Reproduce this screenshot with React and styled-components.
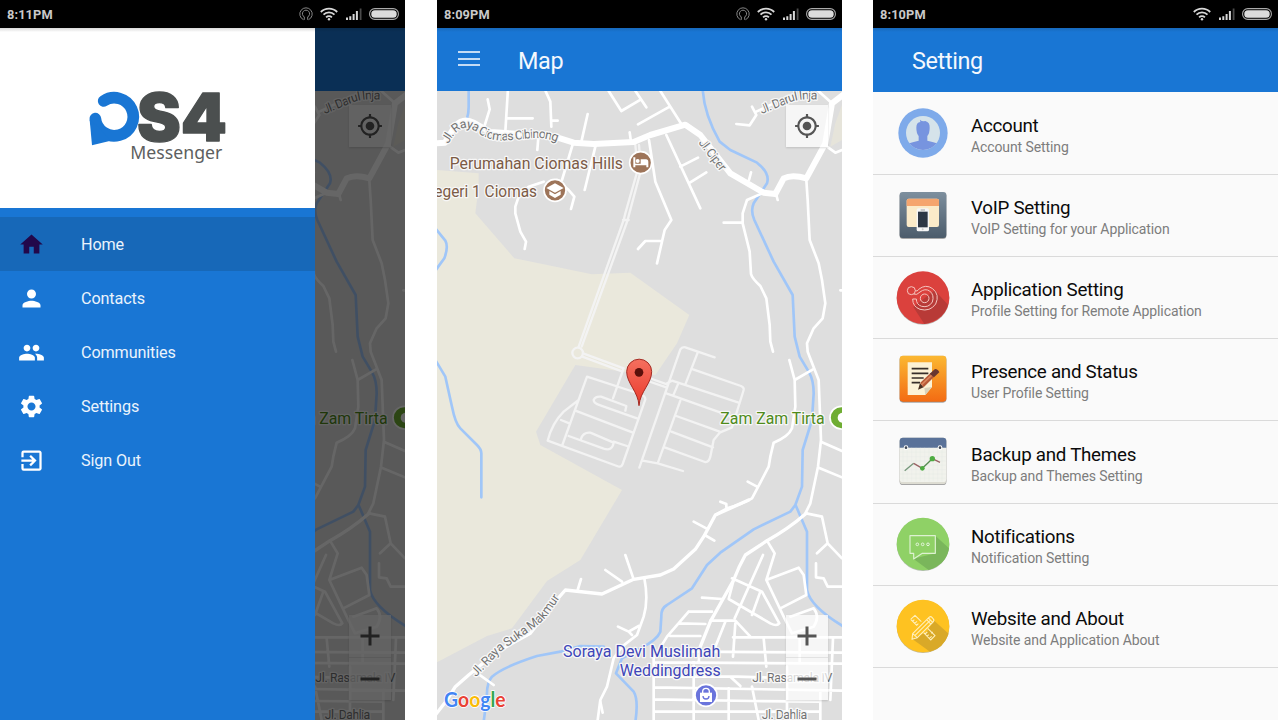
import React from 'react';
import styled, { createGlobalStyle } from 'styled-components';
import { MdHome, MdPerson, MdPeople, MdSettings, MdExitToApp, MdGpsFixed } from 'react-icons/md';

const BLUE = '#1976d4';

const GlobalStyle = createGlobalStyle`
  * { box-sizing: border-box; }
  body { margin: 0; background: #fff; font-family: Roboto, "Liberation Sans", sans-serif; }
  svg { display: block; flex: none; }
`;

const Board = styled.main`
  display: grid;
  grid-template-columns: 405px 405px 405px;
  column-gap: 32px;
  width: 1280px;
  height: 720px;
  overflow: hidden;
`;

const Screen = styled.section`
  position: relative;
  display: flex;
  flex-direction: column;
  height: 720px;
  overflow: hidden;
  background: #fafafa;
  margin-left: ${(p) => p.$shift || 0}px;
  width: 405px;
`;

const StatusRow = styled.div`
  flex: none;
  display: flex;
  align-items: center;
  height: 28px;
  padding: 0 6px 0 7px;
  background: #000;
`;

const Clock = styled.span`
  flex: 1;
  padding-top: 1px;
  color: #c9c9c9;
  font-size: 12.8px;
  font-weight: 700;
  letter-spacing: 0.1px;
`;

const StatusIcons = styled.div`
  display: flex;
  align-items: center;
  gap: 7.5px;
`;

const AppBar = styled.header`
  flex: none;
  display: flex;
  align-items: center;
  height: ${(p) => p.$height}px;
  padding: 0 0 2px ${(p) => p.$inset}px;
  gap: 38.5px;
  background: linear-gradient(#1769bb, ${BLUE} 4px);
`;

const BarTitle = styled.h1`
  margin: 0;
  padding-top: 4px;
  color: #f4f8fd;
  font-size: 23.4px;
  line-height: 26px;
  font-weight: 400;
  letter-spacing: -0.35px;
`;

const MenuButton = styled.button`
  display: flex;
  flex-direction: column;
  gap: 4.3px;
  width: 21.5px;
  padding: 0;
  border: 0;
  background: none;
`;

const MenuLine = styled.span`
  height: 2px;
  background: #c5dcf5;
`;

const MapArea = styled.div`
  position: relative;
  flex: 1;
  min-height: 0;
`;

const MapControl = styled.div`
  position: absolute;
  right: 14px;
  ${(p) => (p.$top ? 'top: 14px;' : 'bottom: 20px;')}
  display: flex;
  flex-direction: column;
  width: 42px;
  background: rgba(255, 255, 255, 0.72);
  box-shadow: 0 1px 2px rgba(0, 0, 0, 0.14);
  color: #555;
`;

const ControlButton = styled.button`
  display: flex;
  align-items: center;
  justify-content: center;
  width: 42px;
  height: 42px;
  padding: 0;
  border: 0;
  background: none;
  color: inherit;
  & + & { border-top: 1px solid rgba(0, 0, 0, 0.08); height: 43px; }
`;

const Scrim = styled.div`
  position: absolute;
  inset: 28px 0 0 0;
  background: rgba(0, 0, 0, 0.6);
`;

const Drawer = styled.nav`
  position: absolute;
  left: 0;
  top: 28px;
  bottom: 0;
  width: 315px;
  background: ${BLUE};
`;

const Brand = styled.div`
  display: flex;
  align-items: center;
  justify-content: center;
  height: 180px;
  padding-top: 20px;
  margin-bottom: 9px;
  background: linear-gradient(#d8d8d8, #fff 4px);
`;

const DrawerItem = styled.a`
  display: flex;
  align-items: center;
  height: 54px;
  padding-left: 18px;
  gap: 36px;
  background: ${(p) => (p.$active ? '#1768b8' : 'transparent')};
  color: #eaf3fc;
  font-size: 16.2px;
  line-height: 20px;
  letter-spacing: -0.12px;
  svg { color: ${(p) => (p.$active ? '#22084a' : '#fff')}; }
  span { padding-top: 2px; }
`;

const SettingList = styled.div`
  display: flex;
  flex-direction: column;
  padding-top: 0.8px;
`;

const SettingRow = styled.article`
  display: flex;
  align-items: center;
  height: 82.17px;
  padding-left: 22.7px;
  gap: 21.3px;
  border-bottom: 1px solid #dadada;
`;

const SettingText = styled.div`
  display: flex;
  flex-direction: column;
  padding-top: 5px;
`;

const SettingTitle = styled.h2`
  margin: 0;
  color: #0b0b0b;
  font-size: 18.75px;
  line-height: 22px;
  font-weight: 400;
  letter-spacing: -0.27px;
`;

const SettingNote = styled.p`
  margin: 0;
  color: #7d7d7d;
  font-size: 14px;
  line-height: 20px;
  letter-spacing: -0.1px;
`;

function StatusBar({ time, cast }) {
  return (
    <StatusRow>
      <Clock>{time}</Clock>
      <StatusIcons>
        {cast && (
          <svg width="14" height="14" viewBox="0 0 14 14" fill="none" stroke="#858585" strokeWidth="1">
            <path d="M4.5 12.7A6.2 6.2 0 1 1 9.5 12.7M5.2 9.9A3.6 3.6 0 1 1 8.8 9.9M5.3 9.7V12.8M8.7 9.7V12.8" />
          </svg>
        )}
        <svg width="18" height="14" viewBox="0 0 18 14" fill="none" stroke="#d8d8d8" strokeWidth="1.8">
          <path d="M.8 5A11.5 11.5 0 0 1 17.2 5M3.5 7.7A7.7 7.7 0 0 1 14.5 7.7M6.1 10.3A4.1 4.1 0 0 1 11.9 10.3" />
          <circle cx="9" cy="12.3" r="1.2" fill="#d8d8d8" stroke="none" />
        </svg>
        <svg width="16" height="14" viewBox="0 0 16 14" fill="#d8d8d8">
          <path d="M0 10.4h2v2.6H0zM3.3 9.2h2V13h-2zM6.6 6.9h2V13h-2zM9.9 4h2v9h-2z" />
          <path d="M13.7 1.5h1.8V13h-1.8z" fill="#4a4a4a" />
        </svg>
        <svg width="30" height="12" viewBox="0 0 30 12">
          <rect x=".6" y=".6" width="28.8" height="10.8" rx="5.2" fill="none" stroke="#aaa" strokeWidth="1.1" />
          <rect x="2.3" y="2.2" width="25.4" height="7.6" rx="3.6" fill="#dcdcdc" />
        </svg>
      </StatusIcons>
    </StatusRow>
  );
}

/* Map drawing: three units to a pixel */
const halo = { stroke: '#f7f7f7', strokeWidth: 8, paintOrder: 'stroke', strokeLinejoin: 'round' };

function MapDrawing({ id }) {
  return (
    <svg width="405" height="629" viewBox="0 273 1215 1887" fontFamily="Roboto, sans-serif">
      <defs>
        <linearGradient id={`${id}-pin`} x1="0" y1="0" x2="0" y2="1">
          <stop offset="0" stopColor="#f5705f" />
          <stop offset="1" stopColor="#ea3a2c" />
        </linearGradient>
        <path id={`${id}-raya`} d="M34 432Q58 386 84 384Q104 384 122 398Q152 419 190 422L225 420L290 414Q330 412 366 428" />
        <path id={`${id}-ciper`} d="M784 428L852 518" />
        <path id={`${id}-suka`} d="M117 2032L190 1955L275 1896Q310 1872 330 1848L372 1788" />
        <path id={`${id}-darul`} d="M974 342L1062 306Q1095 293 1155 300" />
      </defs>
      <rect y="273" width="1215" height="1887" fill="#dedede" />
      <path fill="#eae8dc" d="M0 510L125 520V560L115 640L232 775L465 823L580 818L757 945L720 1030L655 1125L540 1112L415 1095L297 1295L310 1335L555 1470L430 1680L330 1743L225 1885L150 1908L0 1987Z" />
      <path fill="#e6e4da" d="M1215 315L1195 370L1180 440L1215 420Z" />

      <g fill="none" stroke="#a0c6f8" strokeWidth="8" strokeLinejoin="round" strokeLinecap="round">
        <path d="M95 265V320Q95 340 90 355M797 265Q800 340 848 425L880 450L960 488Q1000 520 990 550L950 610Q940 632 952 660L1010 785L1067 885L1073 1010L1088 1070L1115 1115Q1130 1140 1130 1180L1125 1260L1097 1350L1095 1460L1075 1515L1060 1535L950 1588L850 1658L810 1695L765 1765L690 1815Q672 1825 673 1850L670 1895Q660 1920 610 1945L555 1975L537 2020L590 2075Q605 2100 595 2165" />
        <path d="M-5 685L25 722Q35 740 22 775L-5 812M-5 1080L25 1130L45 1220Q55 1270 70 1285L120 1335Q133 1348 133 1360V1492M1077 1518L1110 1595V1770Q1120 1820 1220 1880M500 1940L430 1938L370 1955L300 1968Q200 2000 165 2030Q148 2050 150 2090L140 2165" />
      </g>

      <g fill="none" stroke="#f3f3f3" strokeWidth="7" strokeLinejoin="round" strokeLinecap="round">
        <path d="M595 435L602 510L565 640L560 660L425 1040M606 435L612 510L577 640L572 660L434 1040M558 660H575" />
        <circle cx="422" cy="1059" r="16" />
        <path d="M438 1060L560 1105M436 1070L555 1114M645 1137L692 1154M641 1146L688 1162" />
        <g transform="translate(0 1020)">
          <path d="M450 110L610 162Q625 168 625 178L557 372Q552 384 540 378L332 302Q345 250 380 215L425 180M450 110L375 318M558 90L528 175M415 212L588 278M372 240L397 250M600 235L490 196Q470 190 470 180Q475 168 492 170L568 198L565 212M395 288L500 326Q526 334 530 308L460 278Q438 276 432 297M530 305L570 318" />
          <path d="M607 383L730 28Q735 20 745 22L833 52M782 38L745 133M768 88L912 138Q922 142 920 150L885 262L848 278L830 300L820 350Q815 368 804 366L683 322M690 130L705 122L905 188M688 160L885 230M724 130L710 163M730 182L662 370M718 228L848 275M703 275L828 322M617 362L662 370L738 393" />
        </g>
      </g>

      <g fill="none" stroke="#fff" strokeWidth="8" strokeLinejoin="round" strokeLinecap="round">
        <path strokeWidth="18" d="M-5 430L24 428L55 377Q80 352 110 368L160 396L300 405L360 412L410 428L470 432L590 426L640 405L745 374L790 405L880 520L980 578L1015 582L1040 535Q1065 522 1108 535L1165 430L1185 310L1220 283" />
        <path d="M152 298L158 328L145 370L140 385M213 265L205 395M208 355H287M322 265L340 305L343 380M343 362H362M305 400L301 450M452 342L432 430M408 430L375 540M475 440L443 570M515 273L553 333L612 298M590 265L628 322M665 265L733 372M603 373L698 320M688 405L790 625M730 500L783 473M755 550L808 517M636 420L655 545L703 660L683 690L660 790M670 723H625L603 747M578 397L582 425M898 372L938 376L958 345L945 320M958 335L1010 310M942 517L936 540M980 578L930 600L917 640V670L938 755L942 822Q945 835 970 858L988 895L998 975L1000 1025L1008 1055M860 668H917M1018 585L1022 600M1108 540L1112 600L1118 720L1145 790L1155 840L1165 910L1157 955L1130 985L1110 1030L1112 1055L1145 1140L1152 1320L1143 1400L1120 1510L1105 1540M1170 440L1195 458L1215 450M1135 265L1185 310M263 747L267 725L250 695L235 640V620L245 590L275 560L320 545M360 540L395 570L412 590L402 627M1210 871H1220" />
        <path d="M1057 1080L1073 1140L1128 1108M1073 1140L1075 1220L1065 1285Q1055 1310 1010 1328L1000 1370L995 1400L945 1495Q920 1510 870 1525L835 1545M932 1445L960 1460M850 1505L868 1512L868 1522M1155 1327L1215 1353M1145 1403L1215 1432" />
        <g transform="translate(0 1500)">
          <path strokeWidth="10" d="M935 0L835 45L800 110L775 148L710 207L670 225L590 238L495 282L385 270L350 310L280 400L180 455L95 525L55 560L30 600L-5 645M1108 40Q1050 90 990 122L925 165Q905 200 890 240L820 365L790 440" />
          <path d="M432 237L422 270M565 165L590 238M505 210L555 245M622 235Q635 300 620 350L600 405L555 440L530 475L510 560L490 600L482 660M543 380L575 395L605 378M575 395L585 405M770 65L808 85M803 105L832 122M1108 40L1155 50L1172 130L1215 175M1172 130L1140 160M1137 190V232L1160 235L1172 260H1215M990 122L1013 160L988 240L1040 350L1065 400L1130 380Q1150 350 1130 325L1060 350M988 240L1085 203L1100 225L1108 285L1030 325M978 165L893 355M885 235L975 275L1027 370Q1020 380 1000 370L875 297L890 240M970 275L945 345M795 293L855 297" />
          <path d="M820 362L895 362L940 410M755 335H825M755 335L690 410L650 475V660M725 370L805 372M700 408H790M865 365L835 440M895 370L888 470M888 412H1215M980 415L988 500M760 455L1215 458M650 487L1215 491M650 530H900L1090 535M880 530L910 558M650 562L1215 572M650 598L945 603L1150 605M650 635H1150M770 487V660M790 440L785 487M875 565V660M945 560L965 660M1050 500V660M1088 412V490M1150 570V660M1188 415L1180 600M110 512L170 555M490 605L497 638" />
        </g>
      </g>

      <g fill="#727272" fontSize="37" {...halo}>
        <text><textPath href={`#${id}-raya`} textLength="358">Jl. Raya Ciomas Cibinong</textPath></text>
        <text><textPath href={`#${id}-ciper`} textLength="110">Jl. Ciper</textPath></text>
        <text><textPath href={`#${id}-suka`} textLength="350">Jl. Raya Suka Makmur</textPath></text>
        <text><textPath href={`#${id}-darul`} textLength="175">Jl. Darul Inja</textPath></text>
        <text x="946" y="2047" textLength="240">Jl. Rasamala IV</text>
        <text x="974" y="2158" textLength="137">Jl. Dahlia</text>
      </g>

      <g fontSize="50" {...halo}>
        <g fill="#7c5b46">
          <text x="38" y="507" textLength="520" lengthAdjust="spacingAndGlyphs">Perumahan Ciomas Hills</text>
          <text x="-8" y="590" textLength="308" lengthAdjust="spacingAndGlyphs">egeri 1 Ciomas</text>
        </g>
        <text x="850" y="1272" textLength="313" lengthAdjust="spacingAndGlyphs" fill="#4f8a1b">Zam Zam Tirta</text>
        <g fill="#4046b8">
          <text x="378" y="1972" textLength="472" lengthAdjust="spacingAndGlyphs">Soraya Devi Muslimah</text>
          <text x="548" y="2028" textLength="303" lengthAdjust="spacingAndGlyphs">Weddingdress</text>
        </g>
      </g>

      <g stroke="#fff" strokeWidth="5">
        <circle cx="611" cy="488" r="33" fill="#9d7459" />
        <circle cx="354" cy="571" r="33" fill="#9d7459" />
        <circle cx="1213" cy="1253" r="34" fill="#6fad33" />
        <circle cx="807" cy="2086" r="33" fill="#6a74dc" />
      </g>
      <circle cx="1217" cy="1253" r="15" fill="#fff" />
      <path fill="#fff" d="M589 472h6v19h16v-13h16q7 0 7 8v16h-6v-6h-33v6h-6z" />
      <circle cx="602" cy="483" r="6" fill="#fff" />
      <path fill="#fff" d="M328 564L354 550L380 564L354 578ZM337 573V584L354 594L371 584V573L354 583Z" />
      <path fill="#fff" d="M789 2078h36v28h-36z" />
      <path fill="none" stroke="#fff" strokeWidth="4" d="M797 2082v-7a10 10 0 0 1 20 0v7" />
      <path fill="none" stroke="#6a74dc" strokeWidth="4" d="M798 2088a9 9 0 0 0 18 0" />

      <path d="M606 1217C604 1175 569 1150 569 1115A37 37 0 0 1 644 1115C644 1150 609 1175 606 1217Z" fill={`url(#${id}-pin)`} stroke="#a52a22" strokeWidth="3" />
      <circle cx="606" cy="1117" r="13" fill="#5b100b" />

      <text x="21" y="2122" fontFamily="Lato, sans-serif" fontSize="64" fontWeight="700" textLength="185" lengthAdjust="spacingAndGlyphs" {...halo} stroke="#fff" strokeWidth="5">
        <tspan fill="#4285f4">G</tspan><tspan fill="#e94235">o</tspan><tspan fill="#fabb05">o</tspan><tspan fill="#4285f4">g</tspan><tspan fill="#34a853">l</tspan><tspan fill="#e94235">e</tspan>
      </text>
    </svg>
  );
}

function MapView({ id }) {
  return (
    <MapArea>
      <MapDrawing id={id} />
      <MapControl $top>
        <ControlButton aria-label="My location"><MdGpsFixed size={26} /></ControlButton>
      </MapControl>
      <MapControl>
        <ControlButton aria-label="Zoom in">
          <svg width="20" height="20" viewBox="0 0 20 20" stroke="#555" strokeWidth="3"><path d="M10 .5v19M.5 10h19" /></svg>
        </ControlButton>
        <ControlButton aria-label="Zoom out">
          <svg width="20" height="20" viewBox="0 0 20 20" stroke="#555" strokeWidth="3"><path d="M.5 10h19" /></svg>
        </ControlButton>
      </MapControl>
    </MapArea>
  );
}

function Logo() {
  return (
    <svg width="155" height="95" viewBox="0 0 465 285">
      <path d="M71 60A57 57 0 1 1 46 113" fill="none" stroke={BLUE} strokeWidth="35" strokeLinecap="round" />
      <path d="M29 116L36 193L92 179L52 135Z" fill={BLUE} />
      <text x="171" y="180" fontFamily="Inter, sans-serif" fontSize="197" fontWeight="900" fill="#4b4f4f" stroke="#4b4f4f" strokeWidth="4" strokeLinejoin="round" textLength="270" lengthAdjust="spacingAndGlyphs">S4</text>
      <text x="151" y="235" fontFamily="'Noto Sans', sans-serif" fontSize="52" fill="#5d6060" textLength="276" lengthAdjust="spacingAndGlyphs">Messenger</text>
    </svg>
  );
}

const drop = { filter: 'drop-shadow(0 2px 2px rgba(0,0,0,.5))' };

const AccountIcon = () => (
  <svg width="54" height="54" viewBox="47 50 162 162">
    <circle cx="128" cy="131" r="74" fill="#7eaaea" />
    <circle cx="128" cy="131" r="51" fill="#d5e3ea" />
    <path d="M119 91Q125 97 135 95Q149 99 148 115Q148 132 141 140V154Q158 158 169 162Q153 182 128 182Q103 182 87 162Q99 157 115 154V140Q108 132 108 115Q108 99 120 98Z" fill="#7794df" />
  </svg>
);

const VoipIcon = () => (
  <svg width="54" height="54" viewBox="47 295 162 162">
    <defs><linearGradient id="voip" x2="0" y2="1"><stop stopColor="#7d8f9e" /><stop offset="1" stopColor="#4c5c6b" /></linearGradient></defs>
    <rect x="58" y="304" width="140" height="138" rx="10" fill="url(#voip)" style={drop} />
    <rect x="79" y="324" width="97" height="85" rx="6" fill="#fbebc9" />
    <path d="M79 346V330q0-6 6-6h85q6 0 6 6v16z" fill="#f5a56e" />
    <rect x="109" y="353" width="37" height="69" rx="5" fill="#f6f6f6" />
    <path d="M113 363h29v47h-29z" fill="#2d3745" />
    <path d="M121 358h13" stroke="#777" strokeWidth="2" />
    <circle cx="127" cy="416" r="3" fill="#cbcbcb" />
  </svg>
);

const ApplicationIcon = () => (
  <svg width="54" height="54" viewBox="47 544 162 162">
    <circle cx="128" cy="626" r="79" fill="#b7bbb9" />
    <circle cx="128" cy="624" r="79" fill="#db413d" />
    <path d="M163 602L203 645Q190 690 132 703L99 652Z" fill="#b83a37" />
    <g fill="none" stroke="#f4c5bf" strokeWidth="3">
      <circle cx="93" cy="603" r="12" />
      <circle cx="133" cy="626" r="13" />
      <path d="M105 603Q111 607 115 599Q136 582 157 597Q179 615 166 643Q149 667 119 659Q97 651 97 628H108Q108 645 124 650Q145 655 156 637Q163 616 148 604Q134 595 119 607Q109 618 100 613" />
    </g>
  </svg>
);

const PresenceIcon = () => (
  <svg width="54" height="54" viewBox="47 53 162 162">
    <defs><linearGradient id="presence" x2="0" y2="1"><stop stopColor="#fbb832" /><stop offset="1" stopColor="#f36b13" /></linearGradient></defs>
    <rect x="58" y="61" width="140" height="138" rx="10" fill="url(#presence)" style={drop} />
    <path d="M82 81h73v74l-20 24H82z" fill="#fcf2d5" />
    <path d="M155 155L135 179L132 158Z" fill="#d8d2bb" />
    <path d="M94 100h50M94 114h50M94 128h36M94 142h25" stroke="#372f2a" strokeWidth="5" />
    <path d="M113 163L119 144L130 156Z" fill="#493023" />
    <path d="M119 143L151 113L161 125L130 156Z" fill="#b75a37" />
    <path d="M124 148L156 118" stroke="#da865c" strokeWidth="5" />
    <path d="M148 115L164 101Q174 102 177 111L161 126Z" fill="#693630" />
  </svg>
);

const BackupIcon = () => (
  <svg width="54" height="54" viewBox="47 300 162 162">
    <rect x="58" y="308" width="140" height="139" rx="10" fill="#dddcd2" style={drop} />
    <rect x="58" y="308" width="140" height="133" rx="10" fill="#f1f2ec" />
    <path d="M58 338V318q0-10 10-10h120q10 0 10 10v20z" fill="#5a7299" />
    <path d="M68 338v101M81 338v101M94 338v101M107 338v101M120 338v101M133 338v101M146 338v101M159 338v101M172 338v101M185 338v101M58 352h140M58 365h140M58 378h140M58 391h140M58 404h140M58 417h140M58 430h140" stroke="#e3e9e3" strokeWidth="1" />
    <g fill="#fff"><circle cx="77" cy="338" r="7" /><circle cx="179" cy="338" r="7" /></g>
    <g fill="#424b5a"><circle cx="77" cy="338" r="4" /><circle cx="179" cy="338" r="4" /></g>
    <path d="M73 407L100 385" stroke="#75977a" strokeWidth="4" />
    <path d="M100 385L126 400M156 371L179 382" stroke="#9a6264" strokeWidth="4" />
    <path d="M126 400L156 371" stroke="#568c51" strokeWidth="4" />
    <g fill="#4dac41"><circle cx="126" cy="400" r="7" /><circle cx="156" cy="371" r="8" /></g>
  </svg>
);

const NotificationIcon = () => (
  <svg width="54" height="54" viewBox="47 51 162 162">
    <circle cx="128" cy="134" r="79" fill="#b5bfb2" />
    <circle cx="128" cy="132" r="79" fill="#8fd166" />
    <path d="M165 107L206 145Q198 194 145 210L99 176L165 160Z" fill="#7ab65b" />
    <path d="M89 107h76v53h-39l-26 17v-17H89z" fill="none" stroke="#ddf1d1" strokeWidth="3.5" strokeLinejoin="round" />
    <g fill="none" stroke="#e5f5dc" strokeWidth="3"><circle cx="111" cy="133" r="4" /><circle cx="127" cy="133" r="4" /><circle cx="143" cy="133" r="4" /></g>
  </svg>
);

const WebsiteIcon = () => (
  <svg width="54" height="54" viewBox="47 298 162 162">
    <circle cx="128" cy="381" r="79" fill="#c6b98c" />
    <circle cx="128" cy="379" r="79" fill="#fec221" />
    <path d="M160 362L205 402Q190 446 149 456L96 418L140 396Z" fill="#d9a928" />
    <g fill="none" stroke="#fff0bd" strokeWidth="3.2" strokeLinejoin="round">
      <path d="M91 359L104 347L123 366M91 359L110 378M142 386L164 408L151 421L130 399M97 365l5-5M103 371l7-6M109 377l5-5M134 403l7-6M140 410l5-5M147 416l7-6M153 401l4-4" />
      <path d="M95 419L97 402L146 353Q151 349 155 353L159 358Q163 362 158 367L111 414ZM97 402L111 414M139 360L151 373M144 355L157 368M104 407L149 363" />
    </g>
  </svg>
);

const drawerItems = [
  ['Home', MdHome],
  ['Contacts', MdPerson],
  ['Communities', MdPeople],
  ['Settings', MdSettings],
  ['Sign Out', MdExitToApp],
];

const settings = [
  ['Account', 'Account Setting', AccountIcon],
  ['VoIP Setting', 'VoIP Setting for your Application', VoipIcon],
  ['Application Setting', 'Profile Setting for Remote Application', ApplicationIcon],
  ['Presence and Status', 'User Profile Setting', PresenceIcon],
  ['Backup and Themes', 'Backup and Themes Setting', BackupIcon],
  ['Notifications', 'Notification Setting', NotificationIcon],
  ['Website and About', 'Website and Application About', WebsiteIcon],
];

export default function App() {
  return (
    <>
      <GlobalStyle />
      <Board>
        <Screen>
          <StatusBar time="8:11PM" cast />
          <AppBar $height={63} $inset={21} />
          <MapView id="home" />
          <Scrim />
          <Drawer>
            <Brand><Logo /></Brand>
            {drawerItems.map(([label, Icon], i) => (
              <DrawerItem key={label} $active={i === 0}>
                <Icon size={27} />
                <span>{label}</span>
              </DrawerItem>
            ))}
          </Drawer>
        </Screen>

        <Screen>
          <StatusBar time="8:09PM" cast />
          <AppBar $height={63} $inset={21}>
            <MenuButton aria-label="Menu"><MenuLine /><MenuLine /><MenuLine /></MenuButton>
            <BarTitle>Map</BarTitle>
          </AppBar>
          <MapView id="map" />
        </Screen>

        <Screen $shift={-1}>
          <StatusBar time="8:10PM" />
          <AppBar $height={64} $inset={39}>
            <BarTitle>Setting</BarTitle>
          </AppBar>
          <SettingList>
            {settings.map(([title, note, Icon]) => (
              <SettingRow key={title}>
                <Icon />
                <SettingText>
                  <SettingTitle>{title}</SettingTitle>
                  <SettingNote>{note}</SettingNote>
                </SettingText>
              </SettingRow>
            ))}
          </SettingList>
        </Screen>
      </Board>
    </>
  );
}
